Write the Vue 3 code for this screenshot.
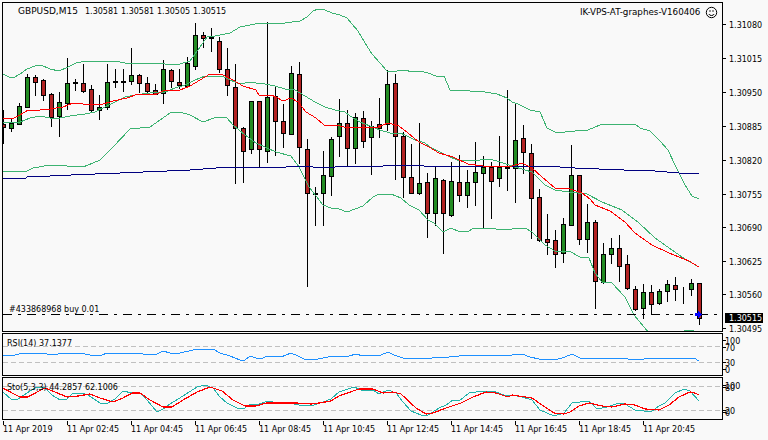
<script setup>
// [high, low, bodyTop, bodyBottom, kind]  g = bull, r = bear, d = doji
const raw = [
  [110,143,124,127,'r'],[119,131,123,128,'g'],[103,124,106,124,'g'],[74,107,77,107,'g'],[75,95,77,82,'r'],
  [79,100,80,95,'r'],[93,126,94,117,'r'],[92,136,102,116,'g'],[58,109,83,103,'g'],[79,90,82,83,'d'],
  [64,92,83,91,'r'],[85,112,89,110,'r'],[95,119,107,110,'g'],[64,109,82,107,'g'],[69,87,81,82,'d'],
  [69,91,81,82,'d'],[48,84,75,81,'g'],[74,92,75,83,'r'],[77,93,83,91,'r'],[84,94,90,94,'r'],
  [60,103,69,93,'g'],[69,87,70,81,'r'],[69,88,82,85,'r'],[57,87,63,86,'g'],[23,69,35,66,'g'],
  [32,47,35,38,'r'],[28,51,37,38,'d'],[37,72,41,69,'r'],[48,95,69,85,'r'],[64,183,87,128,'r'],
  [127,182,128,151,'r'],[101,153,101,149,'g'],[101,166,101,149,'r'],[22,162,97,151,'g'],[87,155,96,121,'r'],
  [104,147,121,133,'r'],[66,134,73,134,'g'],[62,163,74,147,'r'],[139,286,149,193,'r'],[187,225,193,194,'d'],
  [151,225,175,193,'g'],[137,195,139,176,'g'],[99,156,123,136,'g'],[110,166,123,148,'r'],[113,163,117,148,'g'],
  [111,147,118,141,'r'],[121,174,126,137,'g'],[98,137,124,128,'r'],[70,130,84,124,'g'],[74,179,83,136,'r'],
  [132,197,136,177,'r'],[144,193,177,193,'r'],[123,194,183,193,'g'],[173,237,182,213,'r'],[167,225,178,213,'g'],
  [179,253,180,213,'r'],[162,216,181,215,'g'],[155,201,182,195,'r'],[170,207,182,195,'g'],[142,205,172,182,'g'],
  [156,228,167,173,'g'],[162,218,167,181,'r'],[136,186,167,178,'g'],[90,190,166,168,'d'],[103,202,140,168,'g'],
  [125,173,138,152,'r'],[144,238,153,198,'r'],[189,241,197,240,'r'],[214,254,239,242,'r'],[230,267,240,254,'r'],
  [218,262,224,253,'g'],[145,225,175,225,'g'],[175,244,175,239,'r'],[204,252,222,239,'g'],[220,308,222,281,'r'],
  [243,283,254,282,'g'],[238,263,248,254,'g'],[235,281,248,266,'r'],[255,289,264,288,'r'],[286,310,289,309,'r'],
  [284,318,292,308,'g'],[285,313,292,304,'r'],[289,304,291,303,'g'],[280,301,284,291,'g'],[277,300,285,289,'r'],
  [287,303,288,288,'d'],[279,295,283,289,'g'],[283,324,283,318,'r'],
]
const candles = raw.map((c, i) => ({ x: 3 + 8 * i, high: c[0], low: c[1], top: c[2], bottom: c[3], kind: c[4] }))

const pts = (a) => a.map((p) => p.join(',')).join(' ')
// helpers for points read off zoomed crops
const z = (offX, offY, a) => a.map(([x, y]) => [Math.round(offX + x / 3), Math.round(offY + y / 3)])

const bbUpper = pts([[3,74],[9,77],[13,78],[20,74],[27,69],[35,66],[41,65],[50,69],[59,71],[68,67],[76,63],[86,61],[100,62],[115,61],[130,64],[146,63],[160,63],[170,65],[180,64],[190,61],[200,47],[207,37],[215,36],[230,33],[240,27],[250,25],[260,23],[270,23],[285,23],[300,21],[307,17],[313,11],[318,9],[325,10],[332,13],[340,15],[347,18],[352,24],[358,31],[365,43],[372,54],[380,63],[387,71],[397,71],[405,70],[412,72],[420,71],[428,73],[436,76],[444,76],[450,90],[470,91],[485,92],[497,94],[507,98],[512,102],[518,104],[530,110],[540,112],[547,128],[555,132],[565,132],[575,131],[588,130],[600,125],[610,124],[635,124],[640,128],[650,131],[660,141],[668,150],[675,165],[685,185],[692,196],[699,199]])
const bbMiddle = pts([[3,123],[12,122],[20,122],[30,118],[40,116],[50,118],[60,118],[70,116],[85,114],[95,112],[105,107],[115,102],[125,97],[135,95],[150,93],[165,92],[175,88],[185,85],[195,80],[205,76],[222,76],[230,80],[240,84],[250,82],[256,83],[265,84],[275,86],[285,89],[295,90],[305,96],[315,102],[325,107],[335,110],[345,112],[350,116],[360,122],[370,126],[380,130],[390,133],[400,133],[405,135],[415,140],[425,143],[430,147],[440,152],[450,157],[460,161],[470,160],[480,160],[490,159],[500,162],[512,166],[525,170],[532,172],[545,185],[555,190],[569,192],[587,194],[602,202],[622,210],[639,223],[655,238],[672,250],[685,259],[699,267]])
const bbLower = pts([[3,171],[17,171],[27,171],[33,168],[50,165],[67,166],[83,167],[93,163],[100,160],[113,147],[130,129],[150,127],[170,113],[180,112],[190,115],[203,122],[217,117],[227,118],[233,125],[245,135],[256,143],[276,152],[291,156],[299,167],[309,187],[323,205],[331,208],[339,209],[347,212],[363,206],[373,197],[379,194],[391,194],[401,198],[409,205],[419,210],[428,220],[434,223],[443,232],[451,228],[460,232],[469,231],[474,228],[488,228],[504,230],[512,229],[525,228],[532,232],[545,245],[555,251],[569,251],[580,257],[589,258],[595,273],[602,282],[612,283],[625,297],[634,315],[649,333],[670,345],[680,333],[684,331],[689,330],[694,331],[699,333]])
const maRed = pts([[3,118],[12,119],[20,115],[28,110],[40,110],[50,109],[63,107],[73,103],[83,104],[100,105],[113,101],[127,98],[138,94],[157,94],[163,91],[180,90],[190,86],[200,80],[210,74],[223,75],[233,80],[243,86],[256,90],[259,95],[271,95],[276,97],[283,101],[291,98],[298,102],[306,112],[316,118],[324,125],[336,125],[344,127],[358,127],[366,128],[378,127],[388,123],[399,126],[408,133],[419,142],[429,147],[439,153],[453,157],[468,164],[483,166],[512,166],[522,163],[532,168],[542,177],[555,188],[570,189],[582,193],[590,199],[595,205],[610,211],[625,222],[635,233],[652,245],[669,253],[689,261],[699,267]])
const maBlue = pts([[3,178],[26,178],[27,177],[50,176],[71,175],[95,174],[120,173],[143,172],[167,171],[190,170],[216,168],[256,167],[286,167],[288,166],[306,166],[313,167],[335,167],[336,166],[383,166],[384,165],[423,165],[424,166],[512,166],[545,166],[575,168],[599,169],[624,170],[655,171],[679,173],[699,174]])

const rsi = pts([
  ...z(0, 325, [[10,91],[45,90],[70,85],[120,84],[140,88],[160,91],[190,83],[240,84],[270,90],[305,90],[320,83],[400,83],[430,88],[470,88],[490,79],[510,84],[540,84],[580,74],[640,73],[660,84],[690,92],[720,104],[735,104],[750,93],[768,99]]),
  ...z(256, 325, [[12,102],[35,92],[75,96],[105,85],[125,93],[145,102],[185,102],[215,96],[240,92],[280,92],[300,88],[320,92],[375,90],[395,82],[415,90],[440,98],[480,98],[515,103],[540,97],[580,97],[610,94],[670,91],[720,94],[768,89]]),
  ...z(512, 325, [[30,86],[55,95],[80,102],[130,106],[160,97],[180,88],[205,99],[230,99],[250,103],[290,98],[330,100],[365,105],[430,100],[530,99],[545,99],[560,107]]),
])
const stoMain = pts([
  ...z(0, 325, [[10,200],[35,226],[55,223],[80,203],[110,187],[135,188],[155,210],[180,226],[200,222],[220,205],[245,203],[265,210],[300,235],[325,235],[345,222],[370,198],[395,203],[420,205],[440,225],[470,260],[490,253],[510,238],[550,212],[590,187],[615,181],[640,190],[660,215],[680,235],[710,248],[735,248],[750,238],[768,239]]),
  ...z(256, 325, [[35,227],[50,232],[100,235],[130,241],[175,240],[200,230],[225,222],[250,202],[295,187],[325,198],[350,195],[370,207],[395,195],[420,205],[440,230],[465,257],[495,270],[515,270],[550,248],[570,240],[590,225],[610,227],[640,205],[680,197],[720,202],[750,213],[768,211]]),
  ...z(512, 325, [[30,216],[60,225],[85,255],[125,273],[155,265],[180,234],[230,228],[255,252],[285,247],[320,235],[340,238],[370,254],[395,258],[420,258],[440,242],[460,233],[490,205],[515,193],[535,197],[560,228]]),
])
const stoSignal = pts([
  ...z(0, 325, [[10,190],[35,205],[60,217],[85,217],[110,200],[135,190],[165,200],[200,217],[235,212],[270,208],[300,218],[340,232],[370,220],[395,205],[420,205],[450,225],[490,247],[515,247],[550,225],[590,200],[630,187],[665,197],[700,225],[735,244],[768,243]]),
  ...z(256, 325, [[30,234],[120,235],[165,236],[190,235],[225,228],[250,212],[290,197],[310,193],[350,193],[380,203],[410,200],[435,208],[480,250],[510,268],[530,264],[570,250],[615,233],[650,215],[690,201],[720,203],[755,216],[768,209]]),
  ...z(512, 325, [[60,220],[90,240],[125,265],[155,268],[175,260],[200,243],[230,233],[270,244],[300,245],[340,238],[370,241],[400,252],[440,254],[470,240],[500,215],[535,200],[550,203],[560,209]]),
])

const ohlc = [['1.30581', 85], ['1.30581', 121], ['1.30505', 157], ['1.30515', 193]]
const priceLabels = [
  ['1.31080', 24], ['1.31015', 58], ['1.30950', 92], ['1.30885', 126], ['1.30820', 160],
  ['1.30755', 194], ['1.30690', 227], ['1.30625', 261], ['1.30560', 294], ['1.30495', 328],
]
const rsiLabels = [['100', 340], ['70', 347], ['30', 362], ['0', 369]]
const stoLabels = [['100', 385], ['80', 387], ['20', 410], ['0', 412]]
const times = ['11 Apr 2019', '11 Apr 02:45', '11 Apr 04:45', '11 Apr 06:45', '11 Apr 08:45', '11 Apr 10:45', '11 Apr 12:45', '11 Apr 14:45', '11 Apr 16:45', '11 Apr 18:45', '11 Apr 20:45']
</script>

<template>
  <div class="terminal">
    <section class="pane main">
      <div class="plot">
        <svg width="719" height="328" viewBox="3 3 719 328" shape-rendering="crispEdges">
          <g v-for="c in candles" :key="c.x">
            <line :x1="c.x + 0.5" :x2="c.x + 0.5" :y1="c.high" :y2="c.low + 1" stroke="#000" />
            <rect :x="c.x - 1.5" :y="c.top + 0.5" width="4" :height="c.bottom - c.top" :class="c.kind" stroke="#000" />
          </g>
          <polyline :points="bbUpper" class="band" />
          <polyline :points="bbMiddle" class="band" />
          <polyline :points="bbLower" class="band" />
          <polyline :points="maBlue" class="blue" />
          <polyline :points="maRed" class="red" />
          <line x1="3" x2="722" y1="314.5" y2="314.5" stroke="#000" stroke-dasharray="9 6 3 6" />
          <polygon points="695,313 698,313 698,311 702,314.5 698,318 698,316 695,316" fill="#0000ff" />
          <text x="18" y="14" class="symbol">GBPUSD,M15</text>
          <text v-for="o in ohlc" :key="o[1]" :x="o[1]" y="14">{{ o[0] }}</text>
          <text x="580" y="15" class="server">IK-VPS-AT-graphes-V160406</text>
          <g class="smile" shape-rendering="auto">
            <circle cx="711.5" cy="12.5" r="5.2" />
            <path d="M708.8 14c.8 2 4.6 2 5.4 0" />
            <path d="M710 10.2v1.6M713 10.2v1.6" />
          </g>
          <text x="9" y="312">#433868968 buy 0.01</text>
        </svg>
      </div>
      <svg class="scale" width="45" height="330" viewBox="723 2 45 330">
        <g v-for="p in priceLabels" :key="p[0]">
          <rect x="723" :y="p[1]" width="3" height="1" />
          <text x="729" :y="p[1] + 4">{{ p[0] }}</text>
        </g>
        <rect x="725" y="313" width="38" height="10" />
        <text x="729" y="321" class="current">1.30515</text>
      </svg>
    </section>

    <section class="pane sub">
      <div class="plot">
        <svg width="719" height="41" viewBox="3 334 719 41" shape-rendering="crispEdges">
          <line x1="3" x2="722" y1="346.5" y2="346.5" class="level" />
          <line x1="3" x2="722" y1="362.5" y2="362.5" class="level" />
          <polyline :points="rsi" class="rsi" />
          <text x="7" y="346">RSI(14) 37.1377</text>
        </svg>
      </div>
      <svg class="scale" width="45" height="43" viewBox="723 333 45 43">
        <g v-for="p in rsiLabels" :key="p[0]">
          <rect x="723" :y="p[1]" width="3" height="1" />
          <text x="725" :y="p[1] + 4">{{ p[0] }}</text>
        </g>
      </svg>
    </section>

    <section class="pane sub">
      <div class="plot">
        <svg width="719" height="41" viewBox="3 378 719 41" shape-rendering="crispEdges">
          <line x1="3" x2="722" y1="386.5" y2="386.5" class="level" />
          <line x1="3" x2="722" y1="410.5" y2="410.5" class="level" />
          <polyline :points="stoMain" class="sto" />
          <polyline :points="stoSignal" class="red thick" />
          <text x="7" y="390">Sto(5,3,3) 44.2857 62.1006</text>
        </svg>
      </div>
      <svg class="scale" width="45" height="43" viewBox="723 377 45 43">
        <g v-for="p in stoLabels" :key="p[0]">
          <rect x="723" :y="p[1]" width="3" height="1" />
          <text x="725" :y="p[1] + 4">{{ p[0] }}</text>
        </g>
      </svg>
    </section>

    <footer class="times">
      <span v-for="t in times" :key="t" class="time">{{ t }}</span>
    </footer>
  </div>
</template>

<style scoped>
.terminal {
  width: 768px;
  height: 440px;
  box-sizing: border-box;
  padding: 2px 0 0 2px;
  display: flex;
  flex-direction: column;
  gap: 1px;
  background: #f9f9f9;
  font-family: "DejaVu Sans", sans-serif;
  font-size: 8px;
  color: #000;
  overflow: hidden;
}

.pane {
  display: grid;
  grid-template-columns: 721px 45px;
}

.main { height: 330px; }
.sub { height: 43px; }

.plot {
  box-sizing: border-box;
  border: 1px solid #000;
  height: 100%;
  overflow: hidden;
}

svg {
  display: block;
}

svg text {
  font-family: "DejaVu Sans", sans-serif;
  font-size: 8px;
  fill: #000;
}

svg text.symbol { font-size: 9px; }
svg text.server { font-size: 8.75px; }

.scale {
  overflow: visible;
}

.scale rect {
  fill: #000;
}

.scale text.current {
  fill: #fff;
}

rect.g { fill: #228b22; }
rect.r { fill: #b22222; }
rect.d { fill: #000; }

polyline {
  fill: none;
  stroke-width: 1;
}

.band { stroke: #3cb371; }
.blue { stroke: #000080; }
.red { stroke: #ff0000; }
.thick { stroke-width: 1.2; }
.rsi { stroke: #1e90ff; }
.sto { stroke: #20b2aa; }

.level {
  stroke: #c0c0c0;
  stroke-dasharray: 5 3;
}

.smile circle,
.smile path {
  fill: none;
  stroke: #000;
  stroke-width: 1;
}

.times {
  display: flex;
  padding-left: 1px;
}

.time {
  flex: 0 0 64px;
  line-height: 11px;
  padding-top: 3px;
  position: relative;
}

.time::before {
  content: "";
  position: absolute;
  left: 0;
  top: 0;
  width: 1px;
  height: 4px;
  background: #000;
}
</style>
